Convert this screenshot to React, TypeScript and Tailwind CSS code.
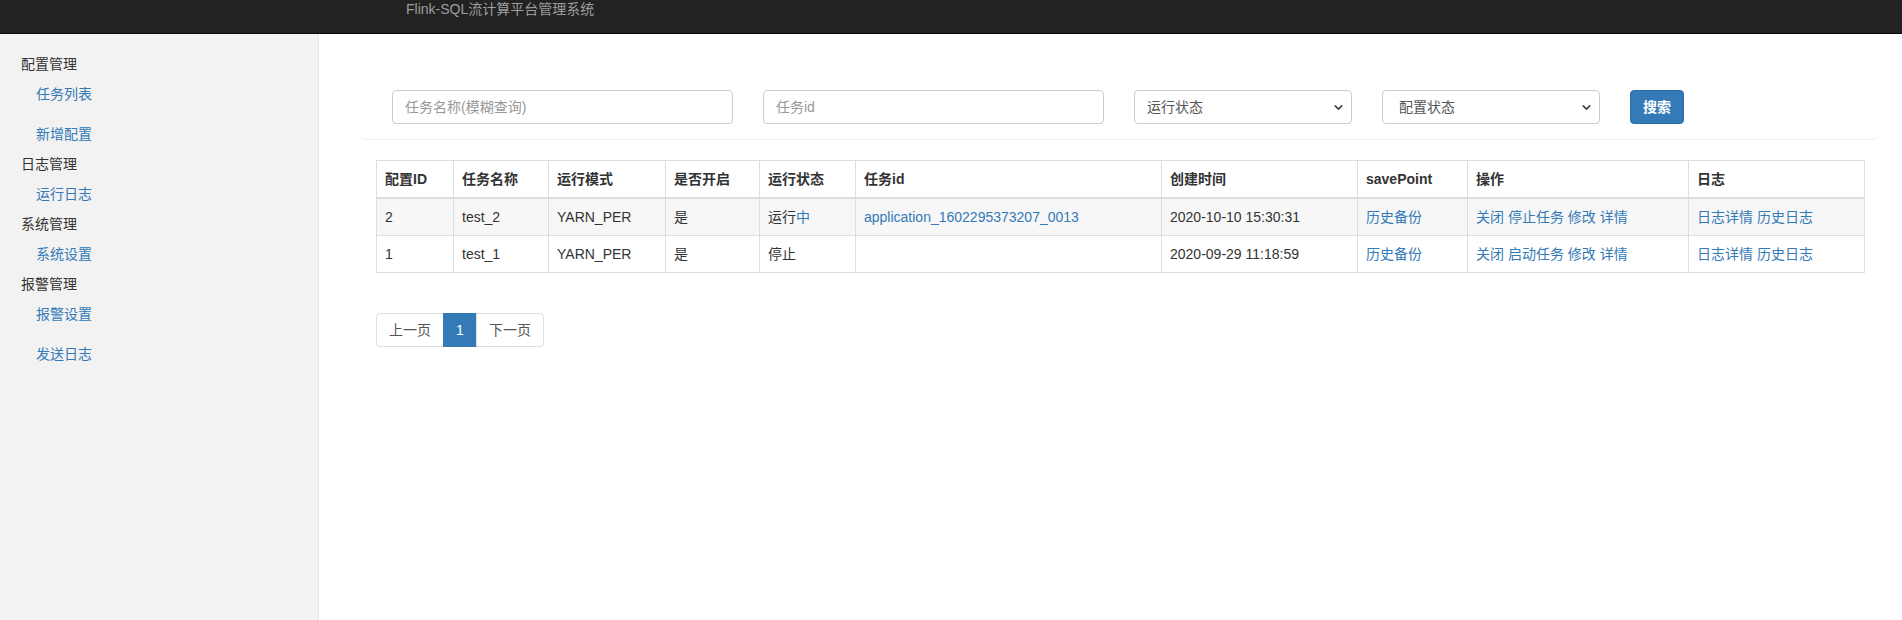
import React from 'react';
import { ChevronDown } from 'lucide-react';

const font = { fontFamily: '"Liberation Sans", "Noto Sans CJK SC", sans-serif' };

const menu = [
  { title: '配置管理', items: ['任务列表', '新增配置'] },
  { title: '日志管理', items: ['运行日志'] },
  { title: '系统管理', items: ['系统设置'] },
  { title: '报警管理', items: ['报警设置', '发送日志'] },
];

const cols = [
  { label: '配置ID', w: 'w-[77px]' },
  { label: '任务名称', w: 'w-[95px]' },
  { label: '运行模式', w: 'w-[117px]' },
  { label: '是否开启', w: 'w-[94px]' },
  { label: '运行状态', w: 'w-[96px]' },
  { label: '任务id', w: 'w-[306px]' },
  { label: '创建时间', w: 'w-[196px]' },
  { label: 'savePoint', w: 'w-[110px]' },
  { label: '操作', w: 'w-[221px]' },
  { label: '日志', w: 'w-[176px]' },
];

const rows = [
  { id: '2', name: 'test_2', mode: 'YARN_PER', open: '是', running: true, appId: 'application_1602295373207_0013', time: '2020-10-10 15:30:31', action: '停止任务' },
  { id: '1', name: 'test_1', mode: 'YARN_PER', open: '是', running: false, appId: '', time: '2020-09-29 11:18:59', action: '启动任务' },
];

const Select = ({ label, pad }: { label: string; pad: string }) => (
  <div className={`w-[218px] h-[34px] rounded border border-[#ccc] bg-white flex items-center justify-between ${pad} pr-[6px] text-[14px] text-[#555]`}>
    <span>{label}</span>
    <ChevronDown size={13} strokeWidth={3} className="text-[#444]" />
  </div>
);

const App: React.FC = () => {
  return (
    <div className="w-[1902px] h-[620px] bg-white flex flex-col overflow-hidden text-[14px] text-[#333]" style={font}>
      {/* Navbar */}
      <div className="h-[34px] bg-[#222] border-b border-[#080808] shrink-0 pl-[406px]">
        <span className="block leading-[18px] text-[14px] text-[#9d9d9d]">Flink-SQL流计算平台管理系统</span>
      </div>

      <div className="flex flex-1 min-h-0">
        {/* Sidebar */}
        <div className="w-[319px] shrink-0 bg-[#f2f2f2] border-r border-[#e6e6e6] pt-[15px]">
          {menu.map((g) => (
            <div key={g.title}>
              <div className="h-[30px] flex items-center pl-[21px] text-[#333]">{g.title}</div>
              {g.items.map((it, i) => (
                <div
                  key={it}
                  className={`h-[30px] flex items-center pl-[36px] text-[#337ab7] ${i > 0 ? 'mt-[10px]' : ''}`}
                >
                  {it}
                </div>
              ))}
            </div>
          ))}
        </div>

        {/* Main */}
        <div className="flex-1 pl-[41px] pr-[24px] pt-[40px]">
          <div className="border-b border-[#eee] rounded-[6px] pl-[32px] pt-[16px] pb-[15px] flex items-center gap-[30px]">
            <div className="w-[341px] h-[34px] rounded border border-[#ccc] px-[12px] flex items-center text-[#999]">任务名称(模糊查询)</div>
            <div className="w-[341px] h-[34px] rounded border border-[#ccc] px-[12px] flex items-center text-[#999]">任务id</div>
            <Select label="运行状态" pad="pl-[12px]" />
            <Select label="配置状态" pad="pl-[16px]" />
            <button className="h-[34px] px-[12px] rounded bg-[#337ab7] border border-[#2e6da4] text-white font-bold">搜索</button>
          </div>

          <div className="ml-[16px] mt-[20px] w-[1488px]">
            <table className="w-full table-fixed border-collapse border border-[#ddd] leading-[20px]">
              <thead>
                <tr>
                  {cols.map((c) => (
                    <th key={c.label} className={`${c.w} text-left font-bold p-[8px] border border-[#ddd] border-b-2`}>
                      {c.label}
                    </th>
                  ))}
                </tr>
              </thead>
              <tbody>
                {rows.map((r, i) => (
                  <tr key={r.id} className={i === 0 ? 'bg-[#f7f7f7]' : 'bg-white'}>
                    <td className="p-[8px] border border-[#ddd]">{r.id}</td>
                    <td className="p-[8px] border border-[#ddd]">{r.name}</td>
                    <td className="p-[8px] border border-[#ddd]">{r.mode}</td>
                    <td className="p-[8px] border border-[#ddd]">{r.open}</td>
                    <td className="p-[8px] border border-[#ddd]">
                      {r.running ? (
                        <>运行<span className="text-[#337ab7]">中</span></>
                      ) : (
                        '停止'
                      )}
                    </td>
                    <td className="p-[8px] border border-[#ddd] text-[#337ab7]">{r.appId}</td>
                    <td className="p-[8px] border border-[#ddd]">{r.time}</td>
                    <td className="p-[8px] border border-[#ddd] text-[#337ab7]">历史备份</td>
                    <td className="p-[8px] border border-[#ddd] text-[#337ab7] whitespace-nowrap">
                      关闭 {r.action} 修改 详情
                    </td>
                    <td className="p-[8px] border border-[#ddd] text-[#337ab7]">日志详情 历史日志</td>
                  </tr>
                ))}
              </tbody>
            </table>

            <div className="mt-[40px] flex">
              <div className="h-[34px] px-[12px] flex items-center border border-[#ddd] rounded-l text-[#555]">上一页</div>
              <div className="-ml-px h-[34px] w-[34px] flex items-center justify-center bg-[#337ab7] border border-[#337ab7] text-white">1</div>
              <div className="-ml-px h-[34px] px-[12px] flex items-center border border-[#ddd] rounded-r text-[#555]">下一页</div>
            </div>
          </div>
        </div>
      </div>
    </div>
  );
};

export default App;
